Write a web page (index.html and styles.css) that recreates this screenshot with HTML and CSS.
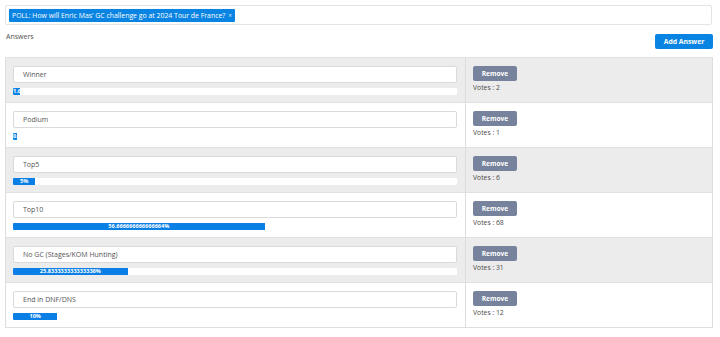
FILE: index.html
```html
<!DOCTYPE html>
<html lang="en">
<head>
  <meta charset="UTF-8">
  <meta name="viewport" content="width=device-width, initial-scale=1.0">
  <title>Poll answers</title>
  <link rel="stylesheet" href="styles.css">
</head>
<body>
  <div class="page">
    <!-- poll selector -->
    <div class="poll-box">
      <span class="poll-tag">POLL: How will Enric Mas' GC challenge go at 2024 Tour de France? <span class="tag-close">×</span></span>
    </div>

    <div class="answers-head">
      <span class="answers-label">Answers</span>
      <button class="btn-add">Add Answer</button>
    </div>

    <!-- answers table -->
    <table class="answers">
      <tr class="odd">
        <td class="answer-cell">
          <div class="answer-input">Winner</div>
          <div class="progress"><div class="progress-fill" style="width: 1.6667%;">1.6666666666666667%</div></div>
        </td>
        <td class="action-cell">
          <button class="btn-remove">Remove</button>
          <div class="votes">Votes : 2</div>
        </td>
      </tr>
      <tr>
        <td class="answer-cell">
          <div class="answer-input">Podium</div>
          <div class="progress"><div class="progress-fill" style="width: 0.8333%;">0.8333333333333334%</div></div>
        </td>
        <td class="action-cell">
          <button class="btn-remove">Remove</button>
          <div class="votes">Votes : 1</div>
        </td>
      </tr>
      <tr class="odd">
        <td class="answer-cell">
          <div class="answer-input">Top5</div>
          <div class="progress"><div class="progress-fill" style="width: 5%;">5%</div></div>
        </td>
        <td class="action-cell">
          <button class="btn-remove">Remove</button>
          <div class="votes">Votes : 6</div>
        </td>
      </tr>
      <tr>
        <td class="answer-cell">
          <div class="answer-input">Top10</div>
          <div class="progress"><div class="progress-fill" style="width: 56.6667%;">56.666666666666664%</div></div>
        </td>
        <td class="action-cell">
          <button class="btn-remove">Remove</button>
          <div class="votes">Votes : 68</div>
        </td>
      </tr>
      <tr class="odd">
        <td class="answer-cell">
          <div class="answer-input">No GC (Stages/KOM Hunting)</div>
          <div class="progress"><div class="progress-fill" style="width: 25.8333%;">25.833333333333336%</div></div>
        </td>
        <td class="action-cell">
          <button class="btn-remove">Remove</button>
          <div class="votes">Votes : 31</div>
        </td>
      </tr>
      <tr>
        <td class="answer-cell">
          <div class="answer-input">End in DNF/DNS</div>
          <div class="progress"><div class="progress-fill" style="width: 10%;">10%</div></div>
        </td>
        <td class="action-cell">
          <button class="btn-remove">Remove</button>
          <div class="votes">Votes : 12</div>
        </td>
      </tr>
    </table>
  </div>
</body>
</html>
```

FILE: styles.css
```css
body, html {
  margin: 0;
  padding: 0;
  background: #ffffff;
  font-family: "Open Sans", "Liberation Sans", sans-serif;
  color: #555555;
  font-size: 7px;
}

.page {
  padding: 5px 7px 0 5px;
}

/* poll selector */
.poll-box {
  box-sizing: border-box;
  height: 20px;
  margin-right: 1px;
  padding: 2px 3px;
  border: 1px solid #e4e4e4;
  border-radius: 2px;
  display: flex;
  align-items: center;
}

.poll-tag {
  display: inline-flex;
  align-items: center;
  height: 13px;
  padding: 0 3px;
  background-color: #0a84e2;
  color: #ffffff;
  font-size: 6.9px;
  border-radius: 1px;
  white-space: nowrap;
}

.tag-close {
  margin-left: 3px;
  font-size: 6.5px;
  opacity: 0.8;
}

.answers-head {
  display: flex;
  justify-content: space-between;
  align-items: flex-start;
  margin-top: 9px;
}

.answers-label {
  margin: -2px 0 0 1px;
  font-size: 7px;
  color: #505050;
}

.btn-add {
  box-sizing: border-box;
  width: 58px;
  height: 15px;
  padding: 0;
  border: none;
  border-radius: 2px;
  background-color: #0a84e2;
  color: #ffffff;
  font-family: "Open Sans", "Liberation Sans", sans-serif;
  font-size: 6.8px;
  font-weight: 700;
}

/* answers table */
.answers {
  width: 100%;
  margin-top: 8px;
  border-collapse: collapse;
  border: 1px solid #dedede;
  table-layout: fixed;
}

.answers tr {
  background-color: #ffffff;
}

.answers tr.odd {
  background-color: #ececec;
}

.answers td {
  box-sizing: border-box;
  height: 45px;
  vertical-align: top;
  border-top: 1px solid #e2e2e2;
}

.answer-cell {
  width: 460px;
  padding: 8px 8px 0 7px;
  border-right: 1px solid #dedede;
}

.action-cell {
  padding: 8px 7px 0 7px;
}

.answer-input {
  box-sizing: border-box;
  height: 17px;
  padding: 0 9px;
  background-color: #ffffff;
  border: 1px solid #dadada;
  border-radius: 2px;
  line-height: 15px;
  font-size: 7px;
  color: #555555;
}

.progress {
  height: 7px;
  margin-top: 5px;
  background-color: #ffffff;
  border-radius: 1px;
  overflow: hidden;
}

.progress-fill {
  height: 7px;
  background-color: #0a7fe6;
  color: #ffffff;
  font-size: 5.6px;
  font-weight: 700;
  line-height: 7px;
  text-align: center;
  white-space: nowrap;
  overflow: hidden;
}

.btn-remove {
  display: block;
  box-sizing: border-box;
  width: 44px;
  height: 15px;
  padding: 0;
  border: none;
  border-radius: 2px;
  background-color: #77839d;
  color: #ffffff;
  font-family: "Open Sans", "Liberation Sans", sans-serif;
  font-size: 6.6px;
  font-weight: 700;
}

.votes {
  margin-top: 2px;
  font-size: 6.8px;
  color: #4a4a4a;
}
```
